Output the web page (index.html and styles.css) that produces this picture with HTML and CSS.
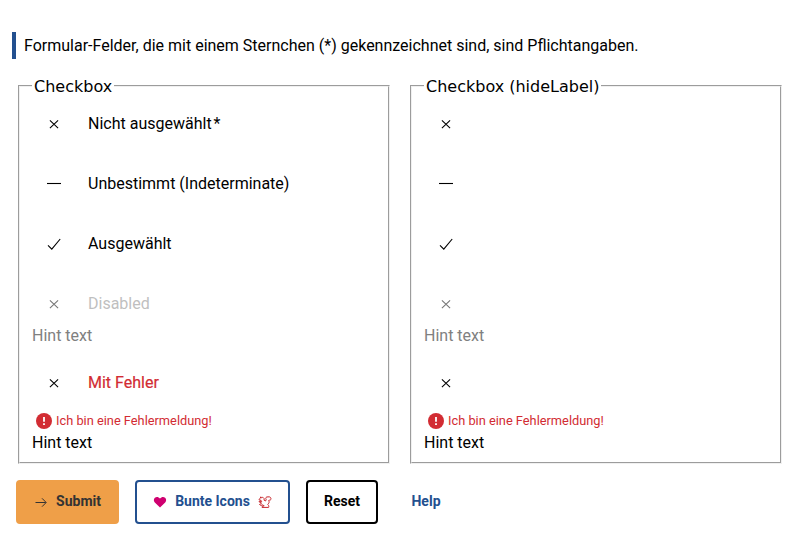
FILE: index.html
```html
<!DOCTYPE html>
<html lang="de">
<head>
<meta charset="utf-8">
<title>Checkbox</title>
<link rel="stylesheet" href="styles.css">
</head>
<body>
<svg class="defs" width="0" height="0">
  <symbol id="cross" viewBox="0 0 16 16"><path d="M3.900 4.300l8.200 7.800M12.100 4.300l-8.200 7.800"/></symbol>
  <symbol id="minus" viewBox="0 0 16 16"><path d="M1 7.5h14"/></symbol>
  <symbol id="check" viewBox="0 0 16 16"><path d="M2 9.300l3.800 3.900L14.200 3"/></symbol>
  <symbol id="alert" viewBox="0 0 16 16"><circle cx="8" cy="8" r="8"/><path class="mark" d="M7.100 4h1.800v4.800H7.100zM7.100 10.200h1.800v1.800H7.100z"/></symbol>
</svg>
<form>
  <p class="notice">Formular-Felder, die mit einem Sternchen (*) gekennzeichnet sind, sind Pflichtangaben.</p>
  <div class="groups">
    <fieldset>
      <legend>Checkbox</legend>
      <div class="row"><svg class="icon"><use href="#cross"/></svg><span>Nicht ausgewählt<span class="star">*</span></span></div>
      <div class="row"><svg class="icon"><use href="#minus"/></svg><span>Unbestimmt (Indeterminate)</span></div>
      <div class="row"><svg class="icon"><use href="#check"/></svg><span>Ausgewählt</span></div>
      <div class="row disabled"><svg class="icon"><use href="#cross"/></svg><span>Disabled</span></div>
      <div class="hint muted">Hint text</div>
      <div class="row invalid"><svg class="icon"><use href="#cross"/></svg><span>Mit Fehler</span></div>
      <div class="error"><svg><use href="#alert"/></svg>Ich bin eine Fehlermeldung!</div>
      <div class="hint">Hint text</div>
    </fieldset>
    <fieldset>
      <legend>Checkbox (hideLabel)</legend>
      <div class="row"><svg class="icon"><use href="#cross"/></svg></div>
      <div class="row"><svg class="icon"><use href="#minus"/></svg></div>
      <div class="row"><svg class="icon"><use href="#check"/></svg></div>
      <div class="row disabled"><svg class="icon"><use href="#cross"/></svg></div>
      <div class="hint muted">Hint text</div>
      <div class="row invalid"><svg class="icon"><use href="#cross"/></svg></div>
      <div class="error"><svg><use href="#alert"/></svg>Ich bin eine Fehlermeldung!</div>
      <div class="hint">Hint text</div>
    </fieldset>
  </div>
  <div class="actions">
    <button type="button" class="btn submit"><svg viewBox="0 0 14 14"><path d="M1.500 7.500h10.300M8 3.300l4.200 4.200L8 11.700"/></svg><span>Submit</span></button>
    <button type="button" class="btn icons"><svg class="heart" viewBox="0 0 14 14"><path d="M7 12.600L1.800 7.400C.4 6 .6 3.700 1.900 2.700C3.500 1.400 5.600 1.800 7 3.500C8.400 1.800 10.500 1.400 12.100 2.700C13.400 3.700 13.600 6 12.200 7.400z"/></svg><span>Bunte Icons</span><svg class="squirrel" viewBox="0 0 14 14"><path d="M2.800 1.800L3.600 2.900L4.700 2.200L6.100 3.600V5.200L7.500 6L8.200 4.700C7 3 8.300 1.500 10 1.900C11.900 1.300 13.500 2.900 12.800 4.600C12.300 5.500 11.300 4.900 10.700 5.400C10.900 6.200 11.500 7 10.800 8.200L9.700 9.300C10.200 10 11.300 10.900 10.600 12.400H4L4.300 11.200L6.200 11L5.100 9.900L2.500 10.400L1.500 9.400L3.200 8.800V7.600L1.200 7V6.200L3.700 6.500L3 5.300L1.300 5L1.200 4.200L2.200 3.200z"/></svg></button>
    <button type="button" class="btn reset"><span>Reset</span></button>
    <button type="button" class="btn help"><span>Help</span></button>
  </div>
</form>
</body>
</html>
```
FILE: styles.css
```css
* { box-sizing: border-box; }
body { margin: 0; background: #fff; color: #000; font: 16px/20px Roboto, sans-serif; }
.defs { display: block; }
form { padding: 32px 18px 0; }
.notice {
  margin: 0 0 0 -6px;
  height: 27px;
  padding-left: 8px;
  border-left: 4px solid #23508f;
  line-height: 27px;
}
.groups { display: grid; grid-template-columns: 372px 372px; gap: 20px; margin-top: 17px; }
fieldset { min-width: 0; height: 388px; margin: 0; padding: 0 12px; border: 2px groove #f0f0f0; }
legend { height: 20px; padding: 0 2px; font: 16px/22px "DejaVu Sans", sans-serif; }
.row { display: flex; align-items: center; height: 40px; margin: 0 0 20px 14px; gap: 26px; }
legend + .row { margin-top: 8px; }
.icon { width: 16px; height: 16px; fill: none; stroke: #000; stroke-width: 1.1; flex: none; }
.star { margin-left: 2px; }
.disabled { margin-bottom: 2px; color: #bfbfbf; }
.disabled .icon { stroke: #777; }
.hint { height: 20px; }
.muted { color: #808080; }
.invalid { margin-top: 17px; margin-bottom: 8px; color: #d22c33; }
.invalid span { -webkit-text-stroke: 0.2px; }
.error { display: flex; align-items: center; gap: 4px; height: 20px; margin-bottom: 2px; padding-left: 4px; color: #d22c33; font-size: 12.8px; }
.error svg { width: 16px; height: 16px; fill: #d22c33; }
.mark { fill: #fff; }
.actions { display: flex; gap: 16px; margin: 16px 0 0 -2px; }
.btn {
  display: flex; align-items: center; justify-content: center; gap: 8px;
  height: 44px; padding: 0; border: 2px solid; border-radius: 4px;
  background: #fff; font: 700 14px/20px Roboto, sans-serif;
}
.btn span { padding-bottom: 2px; }
.btn svg { width: 14px; height: 14px; fill: none; stroke: currentColor; stroke-width: 1; }
.submit { width: 103px; color: #333; background: #ef9f48; border-color: #ef9f48; }
.icons { width: 155px; color: #23508f; }
.btn .heart { fill: #cf0070; stroke: none; }
.btn .squirrel { stroke: #c8282e; }
.reset { width: 72px; color: #000; border-color: #000; }
.help { width: 64px; color: #23508f; border-color: transparent; }
```
